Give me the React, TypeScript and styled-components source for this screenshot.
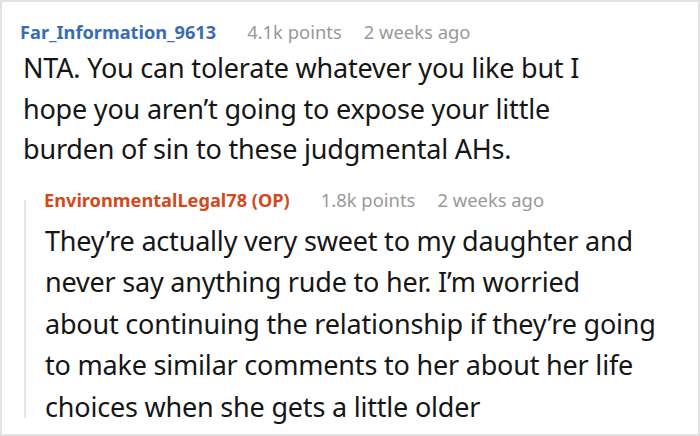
import React from "react";
import styled, { createGlobalStyle } from "styled-components";

const Global = createGlobalStyle`
  html, body { margin: 0; padding: 0; background: #fff; }
  body { font-family: "Noto Sans", "Open Sans", sans-serif; }
`;

const Frame = styled.div`
  box-sizing: border-box;
  width: 700px;
  height: 436px;
  border: 2px solid #e3e3e3;
  background: #fff;
  padding: 18px 0 0 18px;
  overflow: hidden;
`;

const Comment = styled.div`
  display: flex;
  flex-direction: column;
`;

const Meta = styled.div<{ $reply?: boolean }>`
  display: flex;
  align-items: baseline;
  font-size: 18.4px;
  line-height: ${(p) => (p.$reply ? "14px" : "24px")};
  margin-top: ${(p) => (p.$reply ? "-7px" : "0")};
  color: #999;
  white-space: nowrap;
`;

const Author = styled.span<{ $color: string }>`
  font-weight: 700;
  font-size: 18.2px;
  color: ${(p) => p.$color};
  margin-right: 31px;
`;

const Points = styled.span`
  margin-right: 22px;
`;

const Body = styled.p<{ $reply?: boolean }>`
  margin: ${(p) => (p.$reply ? "13px 0 -9px 0" : "4px 0 0 0")};
  padding-left: ${(p) => (p.$reply ? "1px" : "3px")};
  font-size: 27px;
  letter-spacing: -0.2px;
  line-height: ${(p) => (p.$reply ? "41.5px" : "40.5px")};
  color: #161616;
  white-space: nowrap;
`;

const Reply = styled.div`
  margin: 30px 0 0 4px;
  border-left: 2px solid #e6e6e6;
  padding-left: 18px;
  display: flex;
  flex-direction: column;
`;

export default function App() {
  return (
    <>
      <Global />
      <Frame>
        <Comment>
          <Meta>
            <Author $color="#3a6cb5">Far_Information_9613</Author>
            <Points>4.1k points</Points>
            <span>2 weeks ago</span>
          </Meta>
          <Body>
            NTA. You can tolerate whatever you like but I<br />
            hope you aren’t going to expose your little<br />
            burden of sin to these judgmental AHs.
          </Body>
        </Comment>
        <Reply>
          <Meta $reply>
            <Author $color="#d2491c">EnvironmentalLegal78 (OP)</Author>
            <Points>1.8k points</Points>
            <span>2 weeks ago</span>
          </Meta>
          <Body $reply>
            They’re actually very sweet to my daughter and<br />
            never say anything rude to her. I’m worried<br />
            about continuing the relationship if they’re going<br />
            to make similar comments to her about her life<br />
            choices when she gets a little older
          </Body>
        </Reply>
      </Frame>
    </>
  );
}
